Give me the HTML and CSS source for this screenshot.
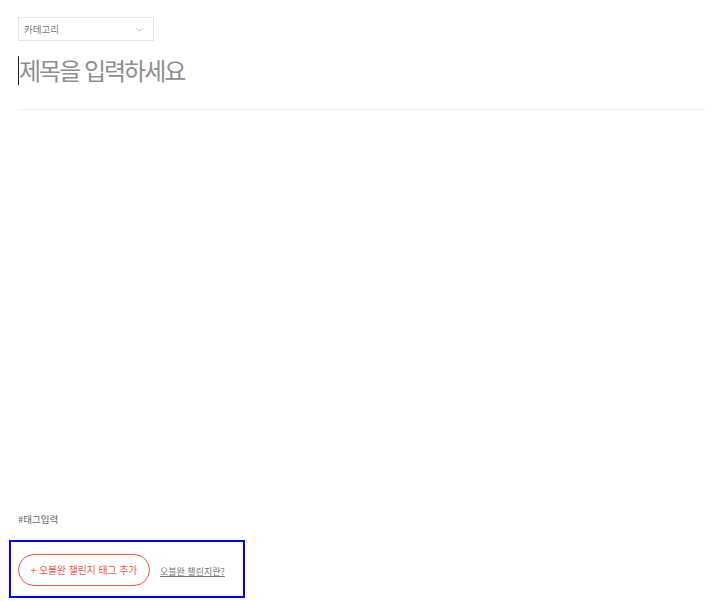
FILE: index.html
```html
<!DOCTYPE html>
<html lang="ko">
<head>
    <meta charset="UTF-8">
    <meta name="viewport" content="width=device-width, initial-scale=1.0">
    <title>글쓰기</title>
    <link rel="stylesheet" href="styles.css">
</head>
<body>
    <div class="editor">
        <div class="category-select">
            <span>카테고리</span>
            <svg class="chevron" width="7" height="5" viewBox="0 0 7 5"><path d="M0.5 1 L3.5 4 L6.5 1" fill="none" stroke="#b5b5b5" stroke-width="0.9"/></svg>
        </div>
        <div class="title-input">
            <span class="caret"></span>
            <span class="placeholder">제목을 입력하세요</span>
        </div>
        <div class="divider"></div>
        <div class="content-area">
            <!-- 본문 영역 -->
        </div>
        <div class="tag-input">#태그입력</div>
        <div class="challenge-box">
            <button class="challenge-button">+ 오블완 챌린지 태그 추가</button>
            <a href="#" class="challenge-link">오블완 챌린지란?</a>
        </div>
    </div>
</body>
</html>
```

FILE: styles.css
```css
body {
    margin: 0;
    font-family: 'Noto Sans CJK KR', 'Noto Sans', sans-serif;
    background-color: #ffffff;
    color: #333333;
}
.editor {
    display: flex;
    flex-direction: column;
    padding: 17px 20px 0 18px;
}
.category-select {
    width: 136px;
    height: 24px;
    box-sizing: border-box;
    border: 1px solid #e6e6e6;
    display: flex;
    align-items: center;
    justify-content: space-between;
    padding: 0 10px 0 5px;
    font-size: 9.5px;
    color: #777777;
}
.chevron {
    display: block;
}
.title-input {
    display: flex;
    align-items: center;
    height: 30px;
    margin-top: 14px;
}
.caret {
    width: 1px;
    height: 29px;
    background-color: #222222;
}
.placeholder {
    font-size: 24px;
    letter-spacing: -2px;
    color: #8e8e8e;
    line-height: 30px;
}
.divider {
    height: 1px;
    background-color: #eeeeee;
    margin-top: 24px;
}
.content-area {
    height: 402px;
}
.tag-input {
    font-size: 9.5px;
    color: #666666;
    line-height: 14px;
}
.challenge-box {
    display: flex;
    align-items: center;
    gap: 10px;
    margin: 14px 0 0 -9px;
    width: 236px;
    height: 58px;
    box-sizing: border-box;
    border: 2px solid #0000ff;
    padding: 2px 0 0 7px;
}
.challenge-button {
    height: 32px;
    width: 132px;
    border: 1px solid #f4533c;
    border-radius: 16px;
    background: #ffffff;
    color: #f4533c;
    font-family: inherit;
    font-size: 9.8px;
    padding: 0;
    cursor: pointer;
}
.challenge-link {
    font-size: 9px;
    color: #777777;
    text-decoration: underline;
    margin-top: 2px;
}
```
